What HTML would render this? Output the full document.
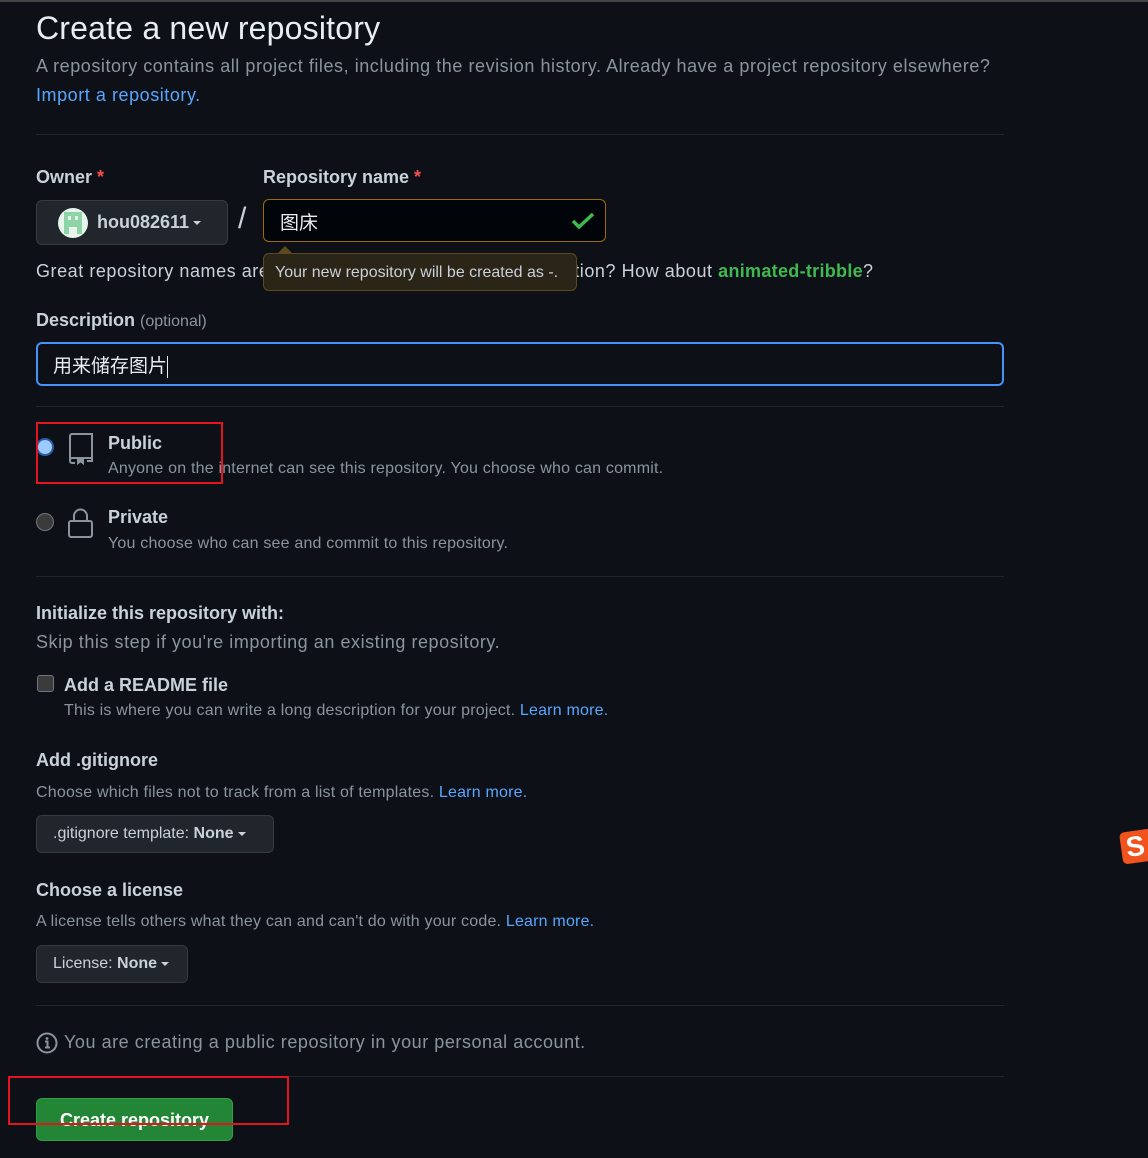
<!DOCTYPE html>
<html><head><meta charset="utf-8"><style>
*{margin:0;padding:0;box-sizing:border-box}
body{width:1148px;height:1158px;background:#0d1117;color:#c9d1d9;font-family:"Liberation Sans","Noto Sans CJK SC",sans-serif;position:relative;overflow:hidden}
.a{position:absolute;white-space:nowrap}
.muted{color:#8b949e}
.link{color:#58a6ff}
.hr{position:absolute;left:36px;width:968px;height:1px;background:#21262d}
.b{font-weight:bold;color:#c9d1d9}
.btn{position:absolute;background:#21262d;border:1px solid #363b42;border-radius:6px;font-size:16px;color:#c9d1d9;padding-left:16px;line-height:36px}
.caret{display:inline-block;width:0;height:0;border-left:4px solid transparent;border-right:4px solid transparent;border-top:4px solid #c9d1d9;vertical-align:middle;margin-left:4px}
.red{color:#f85149}
.w{letter-spacing:0.55px}
.s{letter-spacing:0.2px}
</style></head><body>
<div class="a" style="left:0;top:0;width:1148px;height:2px;background:#444"></div>
<div class="a" style="left:36px;top:10px;font-size:32px;color:#e6edf3;letter-spacing:0.2px">Create a new repository</div>
<div class="a muted w" style="left:36px;top:56px;font-size:18px">A repository contains all project files, including the revision history. Already have a project repository elsewhere?</div>
<div class="a link w" style="left:36px;top:85px;font-size:18px">Import a repository.</div>
<div class="hr" style="top:134px"></div>

<div class="a b" style="left:36px;top:167px;font-size:18px">Owner <span class="red">*</span></div>
<div class="a b" style="left:263px;top:167px;font-size:18px">Repository name <span class="red">*</span></div>
<div class="btn" style="left:36px;top:200px;width:192px;height:45px;line-height:43px;font-size:18px;font-weight:bold;padding-left:60px">hou082611<span class="caret"></span></div>
<div class="a" style="left:58px;top:208px;width:30px;height:30px;border-radius:50%;background:#e8f5ec;overflow:hidden">
<div style="position:absolute;left:6px;top:4px;width:18px;height:22px;background:#8ed4a6"></div>
<div style="position:absolute;left:10px;top:8px;width:3px;height:4px;background:#e8f5ec"></div>
<div style="position:absolute;left:17px;top:8px;width:3px;height:4px;background:#e8f5ec"></div>
<div style="position:absolute;left:11px;top:19px;width:8px;height:7px;background:#e8f5ec"></div>
</div>
<div class="a" style="left:238px;top:202px;font-size:30px;color:#c9d1d9">/</div>
<div class="a" style="left:263px;top:199px;width:343px;height:43px;border:1px solid #9e6a03;border-radius:6px;background:#010409"></div>
<div class="a" style="left:280px;top:208px;font-size:19px;color:#e6edf3">图床</div>
<svg class="a" style="left:571px;top:211px" width="24" height="20" viewBox="0 0 24 20"><path d="M2 10l6 6L22 3" stroke="#3fb950" stroke-width="3.5" fill="none"/></svg>

<div class="a w" style="left:36px;top:261px;font-size:18px">Great repository names are short and memorable. Need inspiration? How about <span style="color:#3fb950;font-weight:bold;letter-spacing:0.3px">animated-tribble</span>?</div>
<div class="a" style="left:263px;top:253px;width:314px;height:38px;background:#2b2517;border:1px solid #5c4a1a;border-radius:6px;font-size:16px;line-height:38px;padding-left:11px;color:#c9d1d9">Your new repository will be created as -.</div>
<div class="a" style="left:278px;top:246px;width:0;height:0;border-left:7px solid transparent;border-right:7px solid transparent;border-bottom:7px solid #5c4a1a"></div>

<div class="a b" style="left:36px;top:310px;font-size:18px">Description <span class="muted" style="font-weight:normal;font-size:16px">(optional)</span></div>
<div class="a" style="left:36px;top:342px;width:968px;height:44px;border:2px solid #4493f8;border-radius:6px;background:#0d1117"></div>
<div class="a" style="left:53px;top:351px;font-size:19px;color:#e6edf3">用来储存图片<span style="display:inline-block;width:1px;height:22px;background:#e6edf3;vertical-align:middle"></span></div>
<div class="hr" style="top:406px"></div>

<div class="a" style="left:36px;top:438px;width:18px;height:18px;border-radius:50%;background:#9fcaff;border:2px solid #2a5da8"></div>
<svg class="a" style="left:67px;top:432px" width="28" height="34" viewBox="0 0 28 34"><path d="M3 29V4a2 2 0 0 1 2-2h20v24H5a2 2 0 0 0-2 2v1a2 2 0 0 0 2 2h3M25 26v3h-5" stroke="#8b949e" stroke-width="2" fill="none"/><path d="M10 26h7v7l-3.5-2.5L10 33z" fill="#8b949e"/></svg>
<div class="a b" style="left:108px;top:433px;font-size:18px">Public</div>
<div class="a muted s" style="left:108px;top:460px;font-size:16px">Anyone on the internet can see this repository. You choose who can commit.</div>
<div class="a" style="left:36px;top:422px;width:187px;height:62px;border:2px solid #e3141d"></div>

<div class="a" style="left:36px;top:513px;width:18px;height:18px;border-radius:50%;background:#3b3b3b;border:1px solid #6e7681"></div>
<svg class="a" style="left:67px;top:507px" width="28" height="32" viewBox="0 0 28 32"><rect x="2" y="14" width="23" height="16" rx="2" stroke="#8b949e" stroke-width="2" fill="none"/><path d="M7 14V9a6.5 6.5 0 0 1 13 0v5" stroke="#8b949e" stroke-width="2" fill="none"/></svg>
<div class="a b" style="left:108px;top:507px;font-size:18px">Private</div>
<div class="a muted s" style="left:108px;top:535px;font-size:16px">You choose who can see and commit to this repository.</div>
<div class="hr" style="top:576px"></div>

<div class="a b" style="left:36px;top:603px;font-size:18px">Initialize this repository with:</div>
<div class="a muted w" style="left:36px;top:632px;font-size:18px">Skip this step if you're importing an existing repository.</div>
<div class="a" style="left:37px;top:675px;width:17px;height:17px;border-radius:3px;background:#3b3b3b;border:1px solid #6e7681"></div>
<div class="a b" style="left:64px;top:675px;font-size:18px">Add a README file</div>
<div class="a muted s" style="left:64px;top:702px;font-size:16px">This is where you can write a long description for your project. <span class="link">Learn more.</span></div>

<div class="a b" style="left:36px;top:750px;font-size:18px">Add .gitignore</div>
<div class="a muted s" style="left:36px;top:784px;font-size:16px">Choose which files not to track from a list of templates. <span class="link">Learn more.</span></div>
<div class="btn" style="left:36px;top:815px;width:238px;height:38px">.gitignore template: <b>None</b><span class="caret"></span></div>

<div class="a b" style="left:36px;top:880px;font-size:18px">Choose a license</div>
<div class="a muted s" style="left:36px;top:913px;font-size:16px">A license tells others what they can and can't do with your code. <span class="link">Learn more.</span></div>
<div class="btn" style="left:36px;top:945px;width:152px;height:38px">License: <b>None</b><span class="caret"></span></div>
<div class="hr" style="top:1005px"></div>

<svg class="a" style="left:36px;top:1032px" width="22" height="22" viewBox="0 0 22 22"><circle cx="11" cy="11" r="9.5" stroke="#8b949e" stroke-width="2" fill="none"/><circle cx="11" cy="6.5" r="1.4" fill="#8b949e"/><path d="M9 9.5h2.5v6M9 15.5h5" stroke="#8b949e" stroke-width="2" fill="none"/></svg>
<div class="a muted w" style="left:64px;top:1032px;font-size:18px">You are creating a public repository in your personal account.</div>
<div class="hr" style="top:1076px"></div>

<div class="a" style="left:36px;top:1098px;width:197px;height:43px;background:#238636;border:1px solid #2ea043;border-radius:6px;color:#fff;font-weight:bold;font-size:18px;line-height:43px;text-align:center">Create repository</div>
<div class="a" style="left:8px;top:1076px;width:281px;height:49px;border:2px solid #e3141d"></div>

<div class="a" style="left:1121px;top:830px;width:40px;height:32px;background:#f0531c;border-radius:5px;transform:rotate(-8deg);color:#fff;font-weight:bold;font-size:28px;line-height:32px;padding-left:5px">S</div>
</body></html>
